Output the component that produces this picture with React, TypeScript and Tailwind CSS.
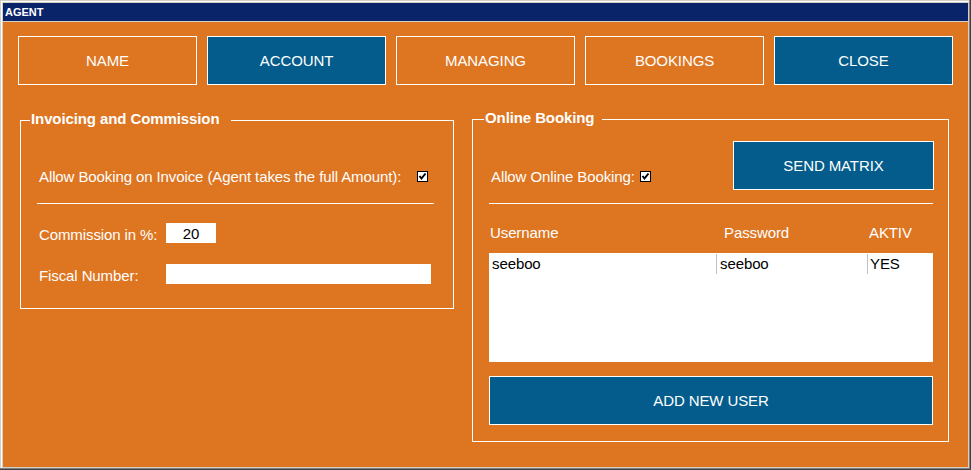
import React from "react";

const font = { fontFamily: '"Liberation Sans", Arial, sans-serif' };

function Check() {
  return (
    <svg width="11" height="11" viewBox="0 0 11 11" className="block shrink-0">
      <rect x="0.5" y="0.5" width="10" height="10" fill="#fff" stroke="#000" />
      <polyline points="2.5,5 4.5,7.5 8.5,2.5" fill="none" stroke="#000" strokeWidth="2" />
    </svg>
  );
}

function TopButton({ label, blue }: { label: string; blue?: boolean }) {
  return (
    <button
      className={
        "w-[179px] h-[49px] pt-[2px] border border-white text-white text-[15px] tracking-[-0.1px] " +
        (blue ? "bg-[#035c8b]" : "bg-transparent")
      }
    >
      {label}
    </button>
  );
}

function Group({
  title,
  legendLeft,
  legendPr,
  className,
  children,
}: {
  title: string;
  legendLeft: string;
  legendPr: string;
  className: string;
  children: React.ReactNode;
}) {
  return (
    <div className={"relative border border-white " + className}>
      <span
        className={
          "absolute top-[-11px] bg-[#de7521] text-white font-bold text-[15px] leading-[18px] pl-[1px] " +
          legendLeft +
          " " +
          legendPr
        }
      >
        {title}
      </span>
      {children}
    </div>
  );
}

export default function App() {
  return (
    <div style={font} className="w-[971px] h-[470px] bg-[#404040] pr-[1px] pb-[1px]">
      <div className="h-full bg-[#808080] pr-[1px] pb-[1px]">
        <div className="h-full flex flex-col bg-[#d4d0c8] border-l border-t border-l-[#d4d0c8] border-t-[#d4d0c8]">
          <div className="flex-1 flex flex-col border-l border-t border-white p-[1px]">
            {/* title bar */}
            <div className="h-[18px] bg-[#0a246a] flex items-center pl-[2px]">
              <span className="text-white font-bold text-[11px] leading-none">AGENT</span>
            </div>
            <div className="h-[1px] bg-[#d4d0c8]" />

            {/* body */}
            <div className="flex-1 bg-[#de7521] pt-[14px] pl-[15px] pr-[14px]">
              <div className="flex gap-[10px]">
                <TopButton label="NAME" />
                <TopButton label="ACCOUNT" blue />
                <TopButton label="MANAGING" />
                <TopButton label="BOOKINGS" />
                <TopButton label="CLOSE" blue />
              </div>

              <div className="flex items-start gap-[18px] mt-[34px] pl-[2px] text-white text-[15px] tracking-[-0.1px]">
                {/* Invoicing and Commission */}
                <Group
                  title="Invoicing and Commission"
                  legendLeft="left-[9px]"
                  legendPr="pr-[12px]"
                  className="w-[434px] h-[189px] mt-[1px] pl-[16px] pr-[19px] pt-[45px]"
                >
                  <div className="h-[20px] flex items-center pl-[2px]">
                    <span className="w-[378px] pt-[2px]">Allow Booking on Invoice (Agent takes the full Amount):</span>
                    <Check />
                  </div>
                  <div className="h-[1px] bg-white mt-[17px]" />
                  <div className="h-[20px] flex items-center pl-[2px] mt-[19px]">
                    <span className="w-[127px] pt-[4px]">Commission in %:</span>
                    <div className="w-[50px] h-[20px] pt-[2px] bg-white text-black flex items-center justify-center">20</div>
                  </div>
                  <div className="h-[20px] flex items-center pl-[2px] mt-[21px]">
                    <span className="w-[127px] pt-[4px]">Fiscal Number:</span>
                    <div className="w-[265px] h-[20px] bg-white" />
                  </div>
                </Group>

                {/* Online Booking */}
                <Group
                  title="Online Booking"
                  legendLeft="left-[11px]"
                  legendPr="pr-[8px]"
                  className="w-[477px] h-[323px] pl-[16px] pr-[15px] pt-[21px]"
                >
                  <div className="flex items-end justify-between">
                    <div className="h-[20px] flex items-center pl-[2px] mb-[4px]">
                      <span className="w-[149px] pt-[2px]">Allow Online Booking:</span>
                      <Check />
                    </div>
                    <button className="w-[201px] h-[49px] pt-[2px] border border-white bg-[#035c8b] text-white text-[15px] tracking-[-0.1px] mr-[-1px]">
                      SEND MATRIX
                    </button>
                  </div>
                  <div className="h-[1px] bg-white mt-[13px]" />
                  <div className="h-[20px] flex items-center mt-[19px] pl-[1px]">
                    <span className="w-[234px]">Username</span>
                    <span className="w-[145px]">Password</span>
                    <span>AKTIV</span>
                  </div>
                  <div className="h-[109px] bg-white mt-[10px] pt-[1px] text-black">
                    <div className="h-[20px] flex">
                      <div className="w-[227px] pl-[3px] flex items-center">seeboo</div>
                      <div className="w-[151px] border-l border-[#c0c0c0] pl-[3px] flex items-center">seeboo</div>
                      <div className="flex-1 border-l border-[#c0c0c0] pl-[2px] flex items-center">YES</div>
                    </div>
                  </div>
                  <button className="w-full h-[49px] mt-[14px] pt-[2px] border border-white bg-[#035c8b] text-white text-[15px] tracking-[-0.1px]">
                    ADD NEW USER
                  </button>
                </Group>
              </div>
            </div>
          </div>
        </div>
      </div>
    </div>
  );
}
